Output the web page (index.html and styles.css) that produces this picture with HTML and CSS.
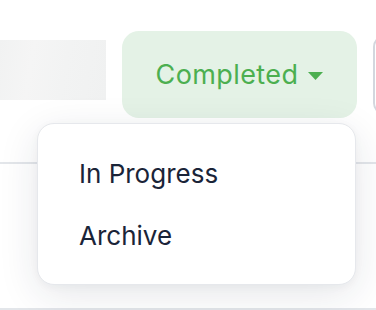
FILE: index.html
```html
<!DOCTYPE html>
<html>
<head>
<meta charset="utf-8">
<link rel="stylesheet" href="styles.css">
</head>
<body>
<div class="page">
  <div class="toolbar">
    <div class="skeleton"></div>
    <div class="status-wrap">
      <button class="status-btn">
        <span class="status-label">Completed</span>
        <svg class="caret" width="15" height="8" viewBox="0 0 15 8"><path d="M0 0 H15 L7.5 8 Z" fill="#4caf50"/></svg>
      </button>
      <div class="menu">
        <div class="menu-item">In Progress</div>
        <div class="menu-item">Archive</div>
      </div>
    </div>
    <div class="next-btn"></div>
  </div>
  <div class="divider"></div>
  <div class="row"></div>
  <div class="divider"></div>
</div>
</body>
</html>
```

FILE: styles.css
```css
html, body {
  margin: 0;
  padding: 0;
  background: #ffffff;
  font-family: "Inter", "Liberation Sans", sans-serif;
}
.page {
  width: 376px;
  height: 310px;
  overflow: hidden;
}
.toolbar {
  display: flex;
  align-items: flex-start;
  gap: 16px;
  height: 162px;
}
.skeleton {
  flex: 0 0 106px;
  height: 60px;
  margin-top: 40px;
  background: linear-gradient(100deg, #f1f2f2 0%, #f5f5f5 30%, #f2f3f3 60%, #f0f1f1 100%);
}
.status-wrap {
  position: relative;
  margin-top: 31px;
}
.status-btn {
  width: 235px;
  height: 87px;
  border: none;
  border-radius: 17px;
  background: #e4f2e6;
  display: flex;
  align-items: center;
  justify-content: center;
  gap: 10px;
  padding: 0;
  font-family: inherit;
  cursor: pointer;
}
.status-label {
  font-size: 27px;
  color: #4caf50;
  font-weight: 400;
  letter-spacing: 0.4px;
}
.caret {
  display: block;
  margin-top: 2px;
}
.next-btn {
  flex: 0 0 40px;
  height: 80px;
  margin-top: 35px;
  margin-left: 0;
  box-sizing: border-box;
  border: 2px solid #d3d7de;
  border-radius: 12px;
}
.menu {
  position: absolute;
  left: -85px;
  top: 92px;
  width: 319px;
  box-sizing: border-box;
  padding: 18px 0;
  background: #ffffff;
  border: 1px solid #e6e8ec;
  border-radius: 17px;
  box-shadow: 0 10px 40px rgba(30, 40, 60, 0.11), 0 2px 8px rgba(30, 40, 60, 0.04);
  z-index: 2;
}
.menu-item {
  height: 62px;
  display: flex;
  align-items: center;
  padding-left: 41px;
  font-size: 26px;
  color: #1a2438;
}
.divider {
  height: 2px;
  background: #e3e6ea;
}
.row {
  height: 144px;
}
```
